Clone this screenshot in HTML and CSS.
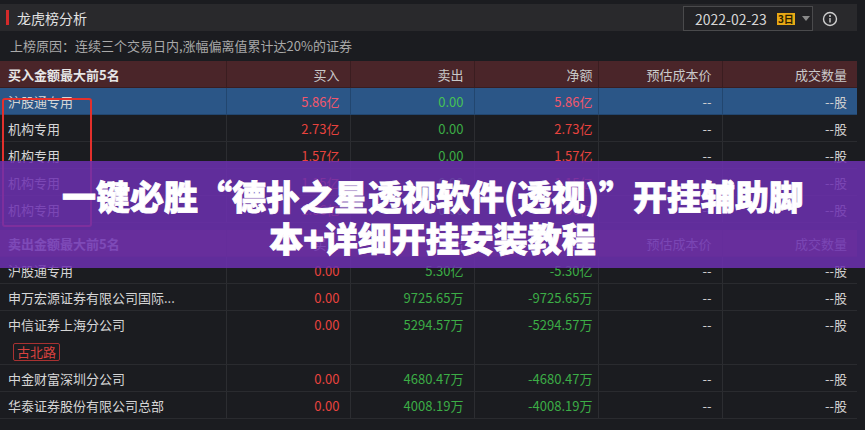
FILE: index.html
```html
<!DOCTYPE html>
<html lang="zh-CN">
<head>
    <meta charset="UTF-8">
    <meta name="viewport" content="width=device-width, initial-scale=1.0">
    <title>龙虎榜分析</title>
    <link rel="stylesheet" href="styles.css">
</head>
<body>

<div id="page">
    <div class="panel">
        <div class="title-bar">
            <div class="title"><span class="title-mark"></span>龙虎榜分析</div>
            <div class="tools">
                <div class="date-box">
                    <span class="date-text">2022-02-23</span>
                    <span class="badge">3日</span>
                    <span class="caret"></span>
                </div>
                <svg class="info-icon" width="16" height="16" viewBox="0 0 16 16">
                    <circle cx="8" cy="8" r="6.5" fill="none" stroke="#cfcfcf" stroke-width="1.4"/>
                    <circle cx="8" cy="5" r="1" fill="#cfcfcf"/>
                    <rect x="7.3" y="7" width="1.4" height="4.5" fill="#cfcfcf"/>
                </svg>
            </div>
        </div>

        <div class="reason">上榜原因：连续三个交易日内,涨幅偏离值累计达20%的证券</div>

        <table class="board">
            <colgroup>
                <col class="c-name">
                <col class="c-num">
                <col class="c-num">
                <col class="c-num">
                <col class="c-num">
                <col class="c-vol">
            </colgroup>
            <tbody id="buy-body">
                <tr class="head">
                    <th>买入金额最大前5名</th><th>买入</th><th>卖出</th><th class="net">净额</th><th>预估成本价</th><th>成交数量</th>
                </tr>
            </tbody>
            <tbody>
                <tr class="spacer"><td colspan="6"></td></tr>
            </tbody>
            <tbody id="sell-body">
                <tr class="head">
                    <th>卖出金额最大前5名</th><th>买入</th><th>卖出</th><th class="net">净额</th><th>预估成本价</th><th>成交数量</th>
                </tr>
            </tbody>
        </table>
    </div>

    <div class="mark-box"></div>

    <div class="banner">
        <div class="banner-text">一键必胜“德扑之星透视软件(透视)”开挂辅助脚本+详细开挂安装教程</div>
    </div>
</div>

<script>
    const buyRows = [
        { name: '沪股通专用', buy: '5.86亿', sell: '0.00', net: '5.86亿', selected: true },
        { name: '机构专用', buy: '2.73亿', sell: '0.00', net: '2.73亿' },
        { name: '机构专用', buy: '1.57亿', sell: '0.00', net: '1.57亿' },
        { name: '机构专用', buy: '1.15亿', sell: '0.00', net: '1.15亿' },
        { name: '机构专用', buy: '1.06亿', sell: '0.00', net: '1.06亿' }
    ];

    const sellRows = [
        { name: '沪股通专用', buy: '0.00', sell: '5.30亿', net: '-5.30亿' },
        { name: '申万宏源证券有限公司国际...', buy: '0.00', sell: '9725.65万', net: '-9725.65万' },
        { name: '中信证券上海分公司', tag: '古北路', buy: '0.00', sell: '5294.57万', net: '-5294.57万' },
        { name: '中金财富深圳分公司', buy: '0.00', sell: '4680.47万', net: '-4680.47万' },
        { name: '华泰证券股份有限公司总部', buy: '0.00', sell: '4008.19万', net: '-4008.19万' }
    ];

    function fillRows(bodyId, rows, side) {
        const body = document.getElementById(bodyId);
        rows.forEach(row => {
            const tr = document.createElement('tr');
            tr.className = row.selected ? 'row selected' : 'row';
            if (row.tag) tr.classList.add('tall');

            const netClass = side === 'buy' ? 'up' : 'down';
            tr.innerHTML = `
                <td class="name">${row.name}${row.tag ? `<div class="tag-line"><span class="tag">${row.tag}</span></div>` : ''}</td>
                <td class="up">${row.buy}</td>
                <td class="down">${row.sell}</td>
                <td class="net ${netClass}">${row.net}</td>
                <td class="plain">--</td>
                <td class="plain">--股</td>
            `;
            body.appendChild(tr);
        });
    }

    fillRows('buy-body', buyRows, 'buy');
    fillRows('sell-body', sellRows, 'sell');
</script>

</body>
</html>
```

FILE: styles.css
```css
body {
    margin: 0;
    background-color: #1b1c20;
    font-family: "Noto Sans CJK SC", sans-serif;
    color: #d4d4d4;
    width: 865px;
    height: 430px;
    overflow: hidden;
}

#page {
    position: relative;
    width: 865px;
    height: 430px;
}

.panel {
    width: 857px;
    padding-top: 4px;
}

.title-bar {
    display: flex;
    justify-content: space-between;
    align-items: center;
    height: 27px;
    background-color: #29292c;
}

.title {
    display: flex;
    align-items: center;
    font-size: 14px;
    color: #e2e2e2;
}

.title-mark {
    display: inline-block;
    width: 3px;
    height: 15px;
    background-color: #d42a2a;
    margin: 0 8px 0 6px;
}

.tools {
    display: flex;
    align-items: center;
    gap: 9px;
    padding-right: 19px;
}

.date-box {
    display: flex;
    align-items: center;
    flex-shrink: 0;
    box-sizing: border-box;
    width: 130px;
    height: 25px;
    margin-top: 2px;
    padding-left: 11px;
    border: 1px solid #4a4a4c;
    background-color: #222225;
    white-space: nowrap;
}

.date-text {
    font-size: 14px;
    color: #d6d6d6;
}

.badge {
    margin-left: 10px;
    padding: 0 1px;
    height: 12px;
    line-height: 12px;
    font-size: 10px;
    background-color: #e8a915;
    color: #2a2000;
    font-weight: bold;
}

.caret {
    margin-left: 7px;
    width: 0;
    height: 0;
    border-left: 4px solid transparent;
    border-right: 4px solid transparent;
    border-top: 5px solid #8a8a8a;
}

.info-icon {
    flex-shrink: 0;
    margin-top: 2px;
}

.reason {
    height: 30px;
    line-height: 30px;
    padding-left: 10px;
    font-size: 13px;
    color: #a9a9a9;
}

.board {
    width: 857px;
    table-layout: fixed;
    border-collapse: collapse;
    font-size: 13px;
}

.c-name { width: 226px; }
.c-num { width: 124px; }
.c-vol { width: 135px; }

.board th,
.board td {
    height: 26px;
    padding: 0 10px 0 0;
    text-align: right;
    white-space: nowrap;
    border-left: 1px solid #2c2d31;
    border-bottom: 1px solid #2a2b2f;
    font-weight: normal;
}

.board th:first-child,
.board td:first-child {
    border-left: none;
    text-align: left;
    padding-left: 8px;
}

.board .net {
    padding-right: 5px;
}

.head th {
    background-color: #4a2529;
    color: #c9c9c9;
    border-left-color: #3a1d20;
    border-bottom-color: #3a1d20;
}

.head th:first-child {
    font-weight: bold;
    color: #e6e6e6;
}

.row .name {
    color: #d6d6d6;
    overflow: hidden;
}

.row.selected td {
    background-color: #2b5687;
    border-left-color: #22466f;
    border-bottom-color: #22466f;
}

.row.selected .up {
    color: #f2566c;
}

.row.selected .down {
    color: #46c255;
}

.up {
    color: #e8433e;
}

.down {
    color: #3cad46;
}

.plain {
    color: #cfcfcf;
}

.spacer td {
    height: 7px;
    border-bottom: none;
    padding: 0;
}

.tall td {
    height: 53px;
    vertical-align: top;
    line-height: 28px;
}

.tag-line {
    line-height: 16px;
    margin-top: 4px;
}

.tag {
    display: inline-block;
    padding: 0 3px;
    border: 1px solid #a83232;
    border-radius: 2px;
    color: #d8423f;
    font-size: 13px;
    line-height: 16px;
    margin-left: 5px;
}

.mark-box {
    position: absolute;
    left: 2px;
    top: 98px;
    width: 86px;
    height: 125px;
    border: 2px solid #e3302c;
    border-radius: 3px;
}

.banner {
    position: absolute;
    left: 0;
    top: 161px;
    width: 865px;
    height: 107px;
    background-color: rgba(108, 48, 176, 0.86);
    display: flex;
    justify-content: center;
}

.banner-text {
    width: 748px;
    padding-top: 14px;
    text-align: center;
    font-size: 34px;
    line-height: 42px;
    font-weight: 900;
    color: #ffffff;
    -webkit-text-stroke: 0.8px #ffffff;
}
```
